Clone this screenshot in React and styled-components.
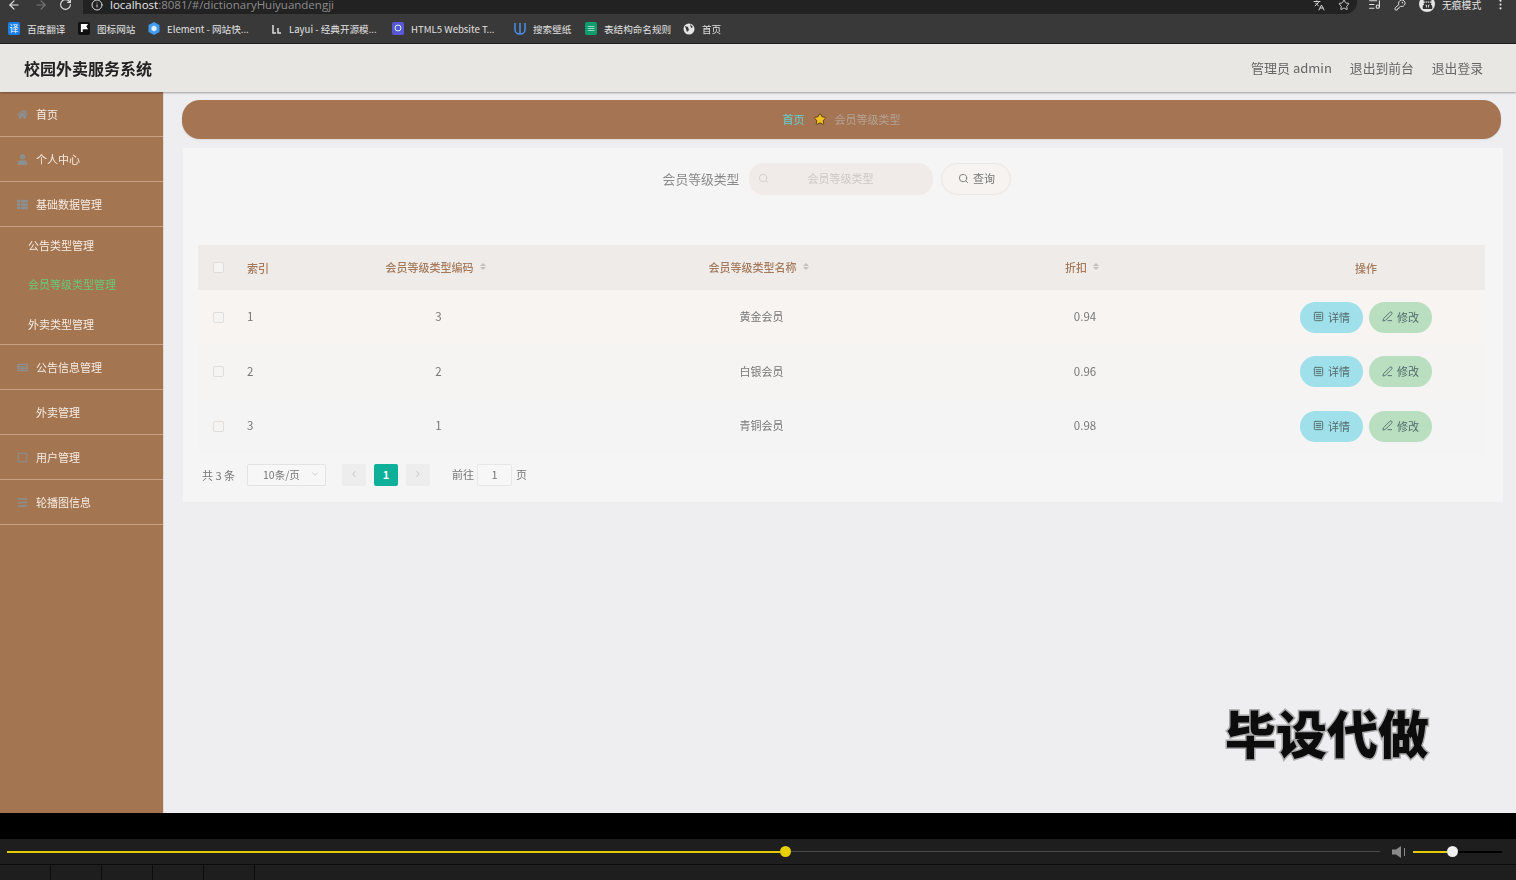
import React from 'react';
import styled, { createGlobalStyle } from 'styled-components';
import { ArrowLeft, ArrowRight, RotateCw, Info, Star, KeyRound, EllipsisVertical, ListMusic, Search, SquareMenu, PenLine, ChevronDown, ChevronLeft, ChevronRight, Languages } from 'lucide-react';
import { FaHome, FaUser, FaThList, FaNewspaper, FaRegSquare, FaBars, FaStar, FaUserSecret } from 'react-icons/fa';

const CJK = `"Noto Sans CJK SC", "Noto Sans", sans-serif`;

const GlobalStyle = createGlobalStyle`
  html, body {
    margin: 0;
    padding: 0;
    background: #000;
  }
  * {
    box-sizing: border-box;
  }
`;

const Page = styled.div`
  width: 1516px;
  height: 880px;
  overflow: hidden;
  display: flex;
  flex-direction: column;
  font-family: ${CJK};
  position: relative;
  filter: blur(0.45px);
`;

// browser chrome at the top, the recording cuts off its upper part
const Toolbar = styled.div`
  height: 14px;
  background: #393939;
  display: flex;
  align-items: flex-start;
  overflow: hidden;
  color: #dcdcdc;
`;

const NavButton = styled.span`
  width: ${(p) => p.$w || 25}px;
  height: 9px;
  display: flex;
  align-items: center;
  justify-content: center;
  color: ${(p) => p.$dim ? '#777' : '#e4e4e4'};
`;

const AddressBar = styled.div`
  width: 1274px;
  height: 14px;
  margin-left: 5px;
  background: #222;
  border-radius: 0 0 12px 0;
  display: flex;
  align-items: flex-start;
  padding: 0 7px 0 8px;
  gap: 7px;
`;

const AddressIcon = styled.span`
  height: 9px;
  display: flex;
  align-items: center;
`;

const Url = styled.div`
  font-family: "Open Sans", sans-serif;
  font-size: 11.5px;
  line-height: 9px;
  color: #8c8c8c;
  white-space: nowrap;
  b {
    font-weight: 400;
    color: #e8e8e8;
  }
`;

const AddressRight = styled.div`
  margin-left: auto;
  display: flex;
  align-items: flex-start;
  gap: 13px;
  color: #cfcfcf;
`;

const ToolRight = styled.div`
  display: flex;
  align-items: flex-start;
  gap: 13px;
  height: 14px;
  margin-left: 11px;
  color: #e4e4e4;
`;

const Incognito = styled.div`
  display: flex;
  align-items: center;
  gap: 7px;
  height: 9px;
  font-size: 9.8px;
  white-space: nowrap;
  color: #e4e4e4;
`;

const IncognitoBadge = styled.span`
  width: 16px;
  height: 16px;
  margin-top: -2px;
  border-radius: 50%;
  background: #e4e4e4;
  color: #333;
  display: flex;
  align-items: center;
  justify-content: center;
`;

const Bookmarks = styled.div`
  height: 30px;
  background: #393939;
  border-bottom: 1px solid #1f1f1f;
  display: flex;
  align-items: center;
  padding-left: 8px;
`;

const Bookmark = styled.div`
  width: ${(p) => p.$w}px;
  display: flex;
  align-items: center;
  gap: 7px;
  font-size: 9.6px;
  color: #e2e2e2;
  white-space: nowrap;
`;

const FavSquare = styled.span`
  width: 12px;
  height: 13px;
  border-radius: 2px;
  background: ${(p) => p.$bg};
  color: #fff;
  font-size: 9px;
  line-height: 13px;
  text-align: center;
  flex: none;
`;

// app header
const Header = styled.header`
  height: 48px;
  background: #e8e7e3;
  box-shadow: 0 1px 2px rgba(0, 0, 0, 0.35);
  display: flex;
  align-items: center;
  justify-content: space-between;
  padding: 0 33px 0 24px;
  position: relative;
  z-index: 1;
`;

const Title = styled.div`
  font-size: 16px;
  font-weight: 700;
  color: #222;
`;

const HeaderLinks = styled.div`
  display: flex;
  align-items: center;
  gap: 18px;
  margin-bottom: 2px;
  font-size: 12.8px;
  color: #666;
`;

const UserName = styled.span`
  font-size: 13px;
`;

const Body = styled.div`
  height: 721px;
  display: flex;
  position: relative;
`;

const Sidebar = styled.aside`
  width: 164px;
  background: #a47551;
  border-right: 1px solid #e9d9cc;
`;

const MenuItem = styled.div`
  height: 45px;
  display: flex;
  align-items: center;
  gap: 8px;
  padding-left: 17px;
  font-size: 11px;
  color: #f6ece4;
  border-bottom: 1px solid #c8a286;
  svg {
    color: #8b8f90;
    width: 11px;
    height: 11px;
    flex: none;
  }
`;

const SubMenu = styled.div`
  height: 120px;
  margin-top: -2px;
  border-bottom: 1px solid #c8a286;
  display: flex;
  flex-direction: column;
`;

const SubItem = styled.div`
  height: 39.5px;
  display: flex;
  align-items: center;
  padding-left: 28px;
  font-size: 11px;
  color: ${(p) => p.$active ? '#67c878' : '#f6ece4'};
`;

const IconGap = styled.span`
  width: 11px;
  flex: none;
`;

const Main = styled.main`
  flex: 1;
  background: #eeeef0;
  padding: 8px 13px 0 18px;
`;

const Breadcrumb = styled.nav`
  height: 39px;
  width: 1319px;
  padding-bottom: 2px;
  border-radius: 18px;
  background: #a57553;
  display: flex;
  align-items: center;
  justify-content: center;
  gap: 8px;
  font-size: 11px;
  color: #b5a294;
  box-shadow: 0 1px 2px rgba(0, 0, 0, 0.08);
`;

const CrumbHome = styled.span`
  color: #5fd3d6;
`;

const StarWrap = styled.span`
  display: flex;
  color: #f2c01e;
  margin: 0 1px;
  svg {
    stroke: #4a3214;
    stroke-width: 40px;
    overflow: visible;
  }
`;

const Panel = styled.section`
  margin-top: 9px;
  margin-left: 1px;
  width: 1320px;
  height: 354px;
  background: #f5f5f5;
  padding: 15px 18px 0 15px;
`;

const SearchRow = styled.div`
  height: 32px;
  display: flex;
  align-items: center;
  justify-content: center;
  padding-right: 9px;
`;

const SearchLabel = styled.label`
  font-size: 12.8px;
  color: #8a8a8a;
  margin-right: 10px;
  padding-bottom: 2px;
`;

const SearchInput = styled.div`
  width: 184px;
  height: 32px;
  border-radius: 14px;
  background: #f0eae8;
  border: 1px solid #f1ecea;
  display: flex;
  align-items: center;
  padding: 0 8px 2px;
  font-size: 11px;
  color: #cdc8c5;
  svg {
    color: #cfcfcf;
  }
`;

const Placeholder = styled.span`
  margin-left: 38px;
`;

const SearchButton = styled.button`
  width: 70px;
  height: 32px;
  margin-left: 8px;
  border-radius: 16px;
  background: #f6f3f1;
  border: 1px solid #ebe7e4;
  display: flex;
  align-items: center;
  justify-content: center;
  gap: 4px;
  font-family: ${CJK};
  font-size: 11px;
  color: #777;
  padding: 0 0 2px;
`;

const Table = styled.div`
  margin-top: 50px;
  width: 1287px;
`;

const Row = styled.div`
  display: grid;
  grid-template-columns: 40px 39px 323px 323px 324px 238px;
  align-items: center;
  height: ${(p) => p.$head ? 45 : 54.5}px;
  background: ${(p) => p.$head ? '#eeebe8' : p.$tint};
  font-size: 11px;
  color: ${(p) => p.$head ? '#a57a5c' : '#777'};
`;

const Cell = styled.div`
  display: flex;
  align-items: center;
  justify-content: ${(p) => p.$left ? 'flex-start' : 'center'};
  gap: 6px;
  padding-left: ${(p) => p.$left ? '9px' : '0'};
  padding-right: ${(p) => p.$sort ? '6px' : '0'};
  padding-bottom: ${(p) => p.$head && !p.$sort ? '0' : '2px'};
  font-weight: ${(p) => p.$head ? 500 : 400};
  font-size: ${(p) => p.$num ? 11.5 : 11}px;
`;

const CheckCell = styled.div`
  display: flex;
  padding-left: 15px;
`;

const Check = styled.span`
  width: 11px;
  height: 11px;
  border-radius: 2px;
  border: 1px solid #e0dedc;
  background: #f6f4f3;
`;

const SortIcon = styled.span`
  display: inline-flex;
  flex-direction: column;
  gap: 1px;
  &::before, &::after {
    content: '';
    width: 0;
    height: 0;
    border-left: 3.5px solid transparent;
    border-right: 3.5px solid transparent;
  }
  &::before {
    border-bottom: 3.5px solid #c3c0bd;
  }
  &::after {
    border-top: 3.5px solid #c3c0bd;
  }
`;

const Actions = styled.div`
  display: flex;
  justify-content: center;
  gap: 6px;
`;

const ActionButton = styled.button`
  width: 63px;
  height: 31px;
  border: none;
  padding: 0 0 1px;
  border-radius: 16px;
  background: ${(p) => p.$bg};
  display: flex;
  align-items: center;
  justify-content: center;
  gap: 4px;
  font-family: ${CJK};
  font-size: 11px;
  color: #53696b;
`;

const Pagination = styled.div`
  height: 22px;
  margin-top: 10px;
  padding-left: 4px;
  display: flex;
  align-items: center;
  font-size: 11px;
  color: #777;
`;

const PageSize = styled.div`
  width: 79px;
  height: 22px;
  margin-left: 12px;
  background: #f7f7f7;
  border: 1px solid #e4e3e2;
  border-radius: 2px;
  display: flex;
  align-items: center;
  justify-content: space-between;
  padding: 0 5px 1px 15px;
  font-size: 10.5px;
  color: #777;
  svg {
    color: #c4c4c4;
  }
`;

const PageButton = styled.span`
  width: ${(p) => p.$w || 24}px;
  height: 22px;
  margin-left: ${(p) => p.$ml}px;
  padding-bottom: 1px;
  border-radius: 2px;
  background: ${(p) => p.$active ? '#0fb09a' : '#eeeded'};
  color: ${(p) => p.$active ? '#fff' : '#b9b9b9'};
  font-weight: ${(p) => p.$active ? 700 : 400};
  display: flex;
  align-items: center;
  justify-content: center;
`;

const Jump = styled.span`
  margin-left: ${(p) => p.$ml}px;
  padding-bottom: 2px;
`;

const JumpInput = styled.span`
  width: 35px;
  height: 22px;
  margin-left: 3px;
  padding-bottom: 1px;
  background: #f7f7f7;
  border: 1px solid #e8e7e6;
  border-radius: 2px;
  display: flex;
  align-items: center;
  justify-content: center;
`;

const Watermark = styled.div`
  position: absolute;
  left: 1225px;
  top: 605px;
  font-size: 51px;
  line-height: 70px;
  font-weight: 900;
  color: #0c0c0c;
  -webkit-text-stroke: 3px #a9a9a9;
  paint-order: stroke fill;
`;

const BlackStrip = styled.div`
  height: 26px;
  background: #000;
`;

// video player controls
const PlayerBar = styled.div`
  height: 26px;
  background: #1e1e1e;
  border-bottom: 1px solid #0c0c0c;
  display: flex;
  align-items: center;
  padding: 0 14px 0 7px;
`;

const Played = styled.div`
  width: 774px;
  height: 2px;
  background: #e3cb05;
`;

const Knob = styled.span`
  width: ${(p) => p.$size}px;
  height: ${(p) => p.$size}px;
  border-radius: 50%;
  background: ${(p) => p.$color};
  flex: none;
`;

const Rest = styled.div`
  width: 590px;
  height: 1px;
  background: #4a4a4a;
`;

const VolumeIcon = styled.svg`
  margin-left: 12px;
  flex: none;
`;

const VolumeOn = styled.div`
  width: 34px;
  height: 2px;
  margin-left: 6px;
  background: #e3cb05;
`;

const VolumeOff = styled.div`
  width: 44px;
  height: 2px;
  background: #000;
`;

const BottomBar = styled.div`
  height: 15px;
  background: #1e1e1e;
  display: flex;
`;

const BottomCell = styled.div`
  width: 51px;
  border-right: 1px solid #0c0c0c;
`;

const BOOKMARKS = [
  { label: '百度翻译', w: 70, icon: <FavSquare $bg="#1a7fe8">译</FavSquare> },
  { label: '图标网站', w: 70, icon: <FavSquare $bg="#111"><svg width="9" height="9" viewBox="0 0 10 10"><path d="M1 1h8l-2 3 2 3H3v3H1z" fill="#fff" /></svg></FavSquare> },
  { label: 'Element - 网站快...', w: 122, icon: <svg width="12" height="13" viewBox="0 0 12 13"><path d="M6 0l5.5 3v7L6 13 .5 10V3z" fill="#3f9bf0" /><path d="M3.5 5L6 3.5 8.5 5v3L6 9.500 3.500 8z" fill="#dff0ff" /></svg> },
  { label: 'Layui - 经典开源模...', w: 122, icon: <svg width="12" height="13" viewBox="0 0 12 13"><path d="M3 3v8h3M8 6v5h3" stroke="#ddd" strokeWidth="1.500" fill="none" /></svg> },
  { label: 'HTML5 Website T...', w: 122, icon: <FavSquare $bg="#5b55d8"><svg width="8" height="8" viewBox="0 0 8 8"><circle cx="4" cy="4" r="3" stroke="#cfd" fill="none" /></svg></FavSquare> },
  { label: '搜索壁纸', w: 71, icon: <svg width="12" height="13" viewBox="0 0 12 13"><path d="M1 1v7a5 4 0 0 0 10 0V1M6 1v10" stroke="#4c8ff0" strokeWidth="1.500" fill="none" /></svg> },
  { label: '表结构命名规则', w: 98, icon: <FavSquare $bg="#0e9d6c">≡</FavSquare> },
  { label: '首页', w: 50, icon: <svg width="12" height="12" viewBox="0 0 12 12"><circle cx="6" cy="6" r="5.500" fill="#e4e4e4" /><path d="M2 3l3 1 1 3-2 2zM7 1l3 3-2 1z" fill="#393939" /></svg> },
];

const RECORDS = [
  { id: 1, code: 3, name: '黄金会员', discount: '0.94', tint: '#f8f4f2' },
  { id: 2, code: 2, name: '白银会员', discount: '0.96', tint: '#f6f4f3' },
  { id: 3, code: 1, name: '青铜会员', discount: '0.98', tint: '#f5f4f4' },
];

function BrowserChrome() {
  return (
    <>
      <Toolbar>
        <NavButton $w={28}><ArrowLeft size={14} /></NavButton>
        <NavButton $dim><ArrowRight size={14} /></NavButton>
        <NavButton><RotateCw size={13} /></NavButton>
        <AddressBar>
          <AddressIcon><Info size={12} /></AddressIcon>
          <Url><b>localhost</b>:8081/#/dictionaryHuiyuandengji</Url>
          <AddressRight>
            <AddressIcon><Languages size={12} /></AddressIcon>
            <AddressIcon><Star size={12} /></AddressIcon>
          </AddressRight>
        </AddressBar>
        <ToolRight>
          <AddressIcon><ListMusic size={13} /></AddressIcon>
          <AddressIcon><KeyRound size={12} /></AddressIcon>
          <Incognito>
            <IncognitoBadge><FaUserSecret size={11} /></IncognitoBadge>
            无痕模式
          </Incognito>
          <AddressIcon><EllipsisVertical size={13} /></AddressIcon>
        </ToolRight>
      </Toolbar>
      <Bookmarks>
        {BOOKMARKS.map((b) => (
          <Bookmark key={b.label} $w={b.w}>{b.icon}{b.label}</Bookmark>
        ))}
      </Bookmarks>
    </>
  );
}

function Menu() {
  return (
    <Sidebar>
      <MenuItem><FaHome />首页</MenuItem>
      <MenuItem><FaUser />个人中心</MenuItem>
      <MenuItem><FaThList />基础数据管理</MenuItem>
      <SubMenu>
        <SubItem>公告类型管理</SubItem>
        <SubItem $active>会员等级类型管理</SubItem>
        <SubItem>外卖类型管理</SubItem>
      </SubMenu>
      <MenuItem><FaNewspaper />公告信息管理</MenuItem>
      <MenuItem><IconGap />外卖管理</MenuItem>
      <MenuItem><FaRegSquare />用户管理</MenuItem>
      <MenuItem><FaBars />轮播图信息</MenuItem>
    </Sidebar>
  );
}

export default function App() {
  return (
    <Page>
      <GlobalStyle />
      <BrowserChrome />
      <Header>
        <Title>校园外卖服务系统</Title>
        <HeaderLinks>
          <UserName>管理员 admin</UserName>
          <span>退出到前台</span>
          <span>退出登录</span>
        </HeaderLinks>
      </Header>
      <Body>
        <Menu />
        <Main>
          <Breadcrumb>
            <CrumbHome>首页</CrumbHome>
            <StarWrap><FaStar size={12} /></StarWrap>
            <span>会员等级类型</span>
          </Breadcrumb>
          <Panel>
            <SearchRow>
              <SearchLabel>会员等级类型</SearchLabel>
              <SearchInput>
                <Search size={11} />
                <Placeholder>会员等级类型</Placeholder>
              </SearchInput>
              <SearchButton><Search size={11} />查询</SearchButton>
            </SearchRow>
            <Table>
              <Row $head>
                <CheckCell><Check /></CheckCell>
                <Cell $left $head>索引</Cell>
                <Cell $head $sort>会员等级类型编码<SortIcon /></Cell>
                <Cell $head $sort>会员等级类型名称<SortIcon /></Cell>
                <Cell $head $sort>折扣<SortIcon /></Cell>
                <Cell $head>操作</Cell>
              </Row>
              {RECORDS.map((r) => (
                <Row key={r.id} $tint={r.tint}>
                  <CheckCell><Check /></CheckCell>
                  <Cell $left $num>{r.id}</Cell>
                  <Cell $num>{r.code}</Cell>
                  <Cell>{r.name}</Cell>
                  <Cell $num>{r.discount}</Cell>
                  <Actions>
                    <ActionButton $bg="#a0e0ea"><SquareMenu size={11} />详情</ActionButton>
                    <ActionButton $bg="#b9dfc0"><PenLine size={11} />修改</ActionButton>
                  </Actions>
                </Row>
              ))}
            </Table>
            <Pagination>
              <span>共 3 条</span>
              <PageSize>10条/页<ChevronDown size={10} /></PageSize>
              <PageButton $ml={16}><ChevronLeft size={10} /></PageButton>
              <PageButton $ml={8} $active>1</PageButton>
              <PageButton $ml={8}><ChevronRight size={10} /></PageButton>
              <Jump $ml={22}>前往</Jump>
              <JumpInput>1</JumpInput>
              <Jump $ml={4}>页</Jump>
            </Pagination>
          </Panel>
        </Main>
        <Watermark>毕设代做</Watermark>
      </Body>
      <BlackStrip />
      <PlayerBar>
        <Played />
        <Knob $size={11} $color="#e9cf07" />
        <Rest />
        <VolumeIcon width="15" height="14" viewBox="0 0 15 14">
          <path d="M0 4.500h4L9 1v12L4 9.500H0z" fill="#8a8a8a" />
          <path d="M12.500 3v8" stroke="#8a8a8a" strokeWidth="1" />
        </VolumeIcon>
        <VolumeOn />
        <Knob $size={11} $color="#efefef" />
        <VolumeOff />
      </PlayerBar>
      <BottomBar>
        {[0, 1, 2, 3, 4].map((i) => <BottomCell key={i} />)}
      </BottomBar>
    </Page>
  );
}
